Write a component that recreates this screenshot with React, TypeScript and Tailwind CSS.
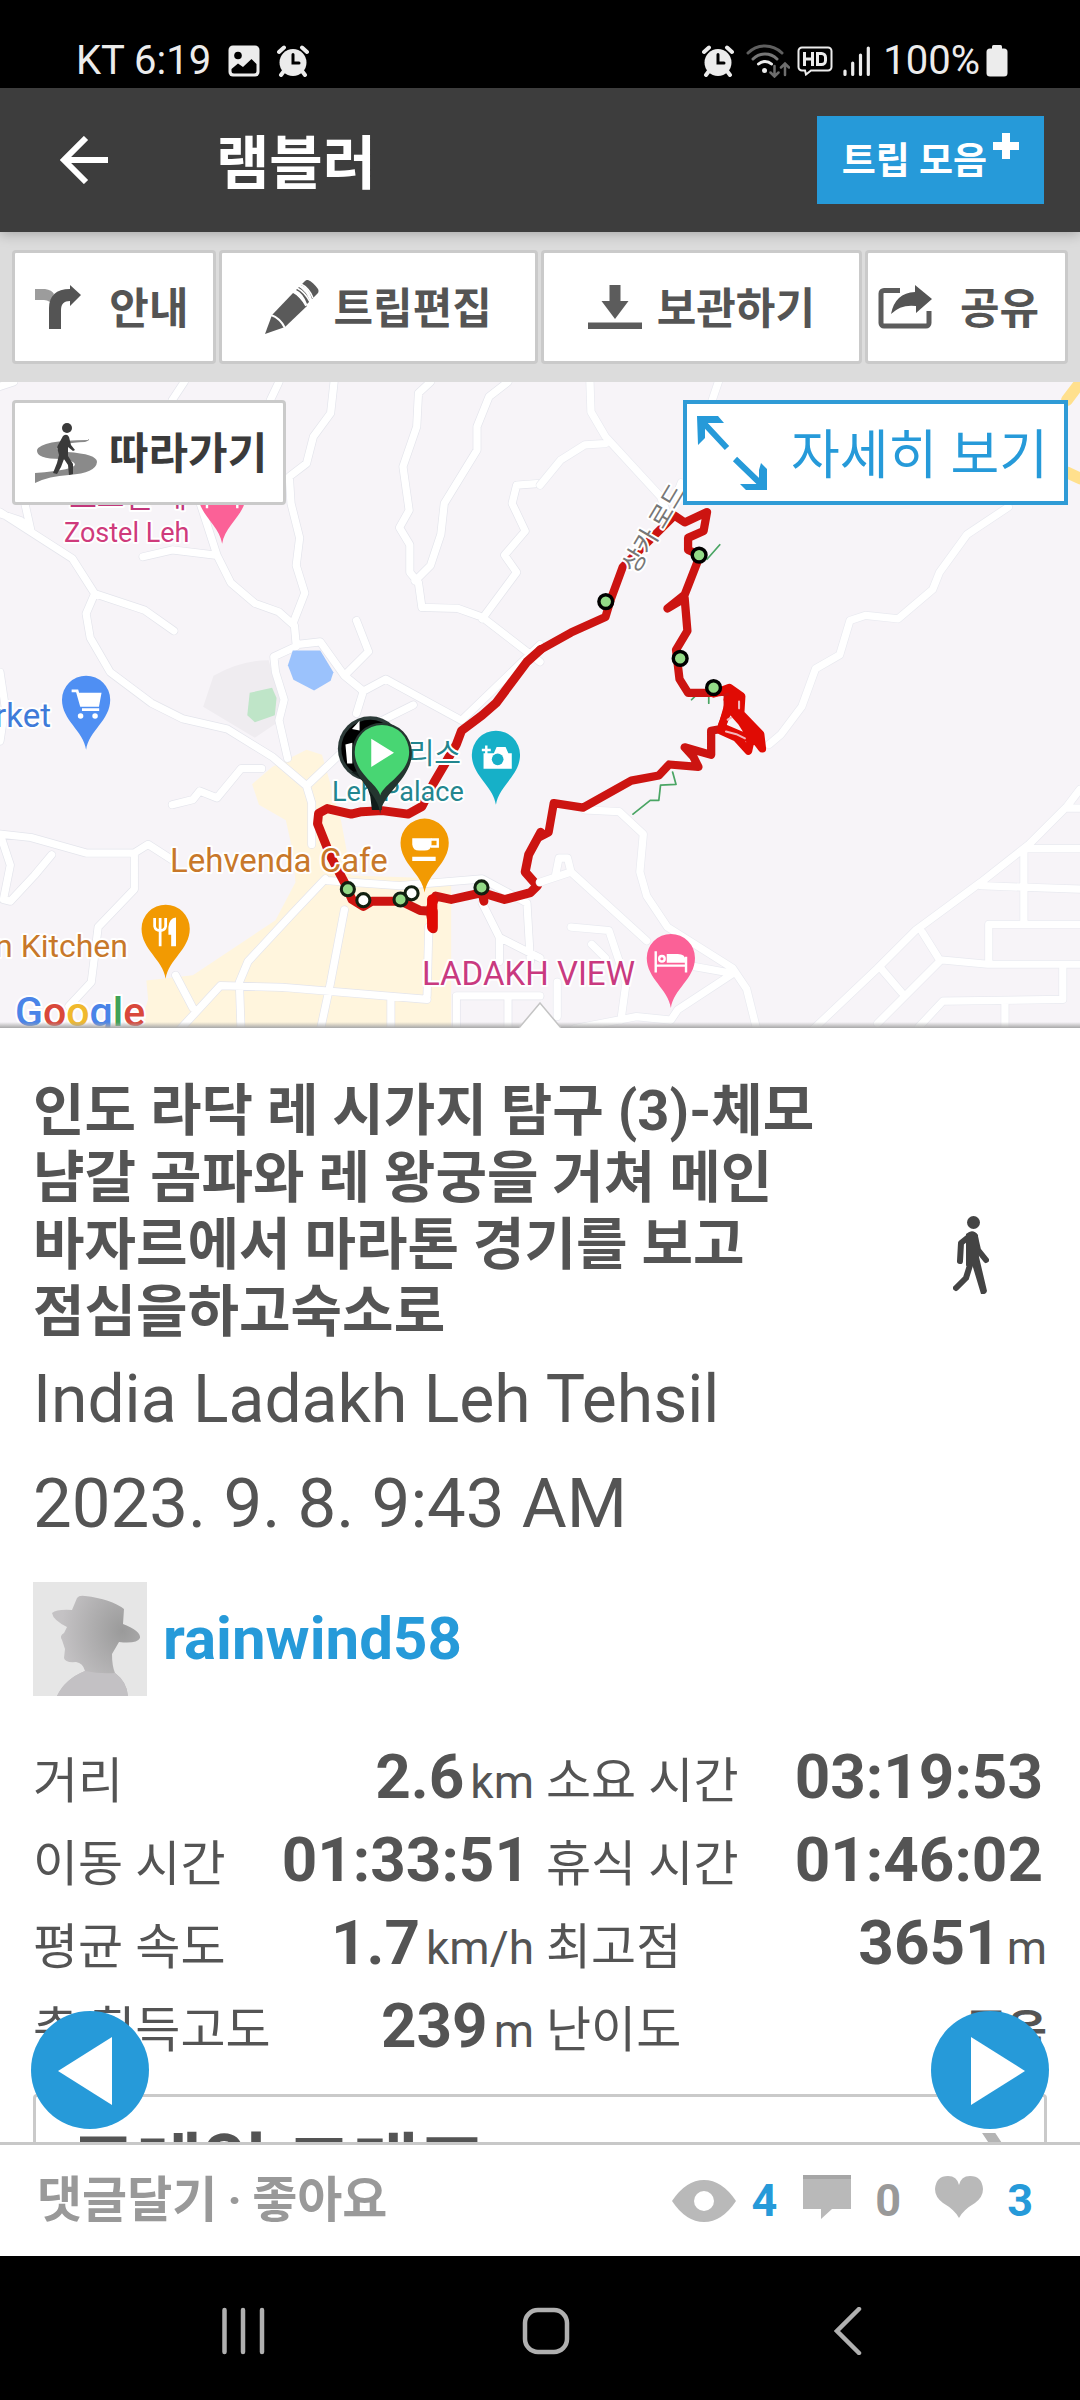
import type { ReactNode } from "react";

interface Stat {
  label: string;
  value: string;
  unit?: string;
}

const stats: Stat[] = [
  { label: "거리", value: "2.6", unit: "km" },
  { label: "소요 시간", value: "03:19:53" },
  { label: "이동 시간", value: "01:33:51" },
  { label: "휴식 시간", value: "01:46:02" },
  { label: "평균 속도", value: "1.7", unit: "km/h" },
  { label: "최고점", value: "3651", unit: "m" },
  { label: "총 획득고도", value: "239", unit: "m" },
  { label: "난이도", value: "좋음" },
];

/* ---------- status bar icons ---------- */

function AlarmIcon() {
  return (
    <svg className="size-8" viewBox="0 0 32 32" aria-hidden="true">
      <circle cx="16" cy="17.500" r="13.500" fill="#ececec" />
      <path d="M2 7l5-4.500M30 7l-5-4.500" stroke="#ececec" strokeWidth="4" strokeLinecap="round" />
      <path d="M7 26l-3 4M25 26l3 4" stroke="#ececec" strokeWidth="4" strokeLinecap="round" />
      <path d="M16 9.500V18h6" stroke="#000" strokeWidth="3" fill="none" strokeLinecap="round" />
    </svg>
  );
}

function PictureIcon() {
  return (
    <svg className="size-8" viewBox="0 0 32 32" aria-hidden="true">
      <rect x="0.500" y="0.500" width="31" height="31" rx="4.500" fill="#ececec" />
      <circle cx="10" cy="10.500" r="3.800" fill="#000" />
      <path d="M3.500 24l6.500-5.500 5 3.500 8.500-8 5 5v7a2.500 2.500 0 0 1-2.500 2.500H6A2.500 2.500 0 0 1 3.500 26z" fill="#000" />
    </svg>
  );
}

function WifiIcon() {
  return (
    <svg className="h-[34px] w-[44px]" viewBox="0 0 44 34" fill="none" strokeLinecap="round" aria-hidden="true">
      <path d="M2 9a24 24 0 0 1 34 0" stroke="#5f5f5f" strokeWidth="3" />
      <path d="M7 15a17 17 0 0 1 24 0" stroke="#777" strokeWidth="3" />
      <path d="M12.500 20a9.500 9.500 0 0 1 13 0" stroke="#ececec" strokeWidth="3" />
      <circle cx="18.500" cy="26.500" r="2.500" fill="#ececec" />
      <path d="M28.500 22v10M24.500 28.500l4 4 4-4M39 31V20M35 23.500l4-4 4 4" stroke="#6d6d6d" strokeWidth="2.500" />
    </svg>
  );
}

function HdIcon() {
  return (
    <svg className="h-[30px] w-[36px]" viewBox="0 0 36 30" fill="none" stroke="#ececec" aria-hidden="true">
      <path d="M5 1.500h26a3.500 3.500 0 0 1 3.500 3.500v16a3.500 3.500 0 0 1-3.500 3.500H14l-5 4-1-4H5A3.500 3.500 0 0 1 1.500 21V5A3.500 3.500 0 0 1 5 1.500z" strokeWidth="2" />
      <path d="M7.500 6v14M15.500 6v14M7.500 13h8" strokeWidth="3" />
      <path d="M20.500 7.500h4a4 4 0 0 1 4 4v3a4 4 0 0 1-4 4h-4z" strokeWidth="3" />
    </svg>
  );
}

function SignalIcon() {
  return (
    <svg className="h-[32px] w-[28px]" viewBox="0 0 28 32" stroke="#ececec" strokeWidth="3.200" strokeLinecap="round" aria-hidden="true">
      <path d="M2 26v3.500M9.700 18v11.500M17.500 10v19.500M25.300 3v26.500" />
    </svg>
  );
}

function BatteryIcon() {
  return (
    <svg className="h-8 w-[22px]" viewBox="0 0 22 32" fill="#ececec" aria-hidden="true">
      <rect x="6" y="0" width="10" height="6" rx="1.500" />
      <rect x="0.500" y="3.500" width="21" height="28" rx="3.500" />
    </svg>
  );
}

/* ---------- toolbar icons ---------- */

function GuideIcon() {
  return (
    <svg className="h-[44px] w-[46px]" viewBox="0 0 46 44" aria-hidden="true">
      <path d="M0 4h10q7 1 9 5l-4 8q-3-2-6-2H0z" fill="#9c9c9c" />
      <path d="M14 44V23C14 11 21 4 35 4V0l11 10-11 11v-5c-6 0-9 3-9 9v19z" fill="#545454" />
    </svg>
  );
}

function PencilIcon() {
  return (
    <svg className="size-[54px]" viewBox="0 0 54 54" aria-hidden="true">
      <path d="M0 54l7-19L29 12l13 14-22 21z" fill="#5a5a5a" />
      <path d="M31 10q7 3 11 14l3-3Q41 11 34 7zM36 5q8 3 11 14l6-6q1-2 0-4Q48 2 43 0q-2-.5-4 2z" fill="#5a5a5a" />
      <path d="M6 35q9 3 14 13" fill="none" stroke="#fff" strokeWidth="2" />
      <path d="M28 12q8 4 13 14M32 8q8 4 13 14M36 4q8 4 12 14" fill="none" stroke="#fff" strokeWidth="1.600" />
    </svg>
  );
}

function SaveIcon() {
  return (
    <svg className="h-[44px] w-[54px]" viewBox="0 0 54 44" fill="#5c5c5c" aria-hidden="true">
      <path d="M21.500 0h11v16h8L27 34 13.500 16h8zM0 37.500h54V44H0z" />
    </svg>
  );
}

function ShareIcon() {
  return (
    <svg className="h-[44px] w-[54px]" viewBox="0 0 54 44" aria-hidden="true">
      <path d="M22 5.500H6a3 3 0 0 0-3 3V38a3 3 0 0 0 3 3h42a3 3 0 0 0 3-3V26" fill="none" stroke="#5c5c5c" strokeWidth="5" />
      <path d="M37 0l17 14-16 14v-7q-15-2-25 8Q17 8 37 7z" fill="#545454" />
    </svg>
  );
}

function FollowIcon() {
  return (
    <svg className="h-[60px] w-[62px]" viewBox="0 0 62 60" aria-hidden="true">
      <path d="M53 17Q6 17 2 27q-1 9 24 9 12 1 14 5 1 6-40 9v10q14-7 34-8 27-2 28-13 0-8-30-10-12-1-10-5 4-4 28-5 6-2 3-3z" fill="#8a8a8a" />
      <circle cx="32" cy="5" r="5" fill="#3a3a3a" />
      <path d="M28 13q4-3 6 1l2 8 4 5-2 1-5-4v9l5 8v10l-4 1-1-10-4-6-3 8-4 7-4-1 4-10 2-8-2-8z" fill="#3a3a3a" />
    </svg>
  );
}

function ExpandIcon() {
  return (
    <svg className="h-[74px] w-[70px]" viewBox="0 0 70 74" fill="none" stroke="#269ad9" strokeWidth="6" aria-hidden="true">
      <path d="M3 3l27 29M38 43l29 28" />
      <path d="M0 0h21l6 7H8v15l-7 7zM70 74H49l-6-6h19V54l2-7 6 6z" fill="#269ad9" stroke="none" />
    </svg>
  );
}

function WalkIcon() {
  return (
    <svg className="h-[78px] w-[36px]" viewBox="0 0 36 78" role="img" aria-label="걷기">
      <circle cx="20.500" cy="6.500" r="6.500" fill="#444" />
      <path d="M18 19L8 27 7 45M22 21l3 13 8 10M18 46l-5 16-10 10" fill="none" stroke="#444" strokeWidth="6" strokeLinecap="round" strokeLinejoin="round" />
      <path d="M13 18q7-6 12 1l1 22 8 34q-1 4-6 3l-9-30-6 2z" fill="#444" />
    </svg>
  );
}

/* ---------- map ---------- */

interface PinProps {
  x: number;
  y: number;
  color: string;
  children?: ReactNode;
}

// x, y is the tip of the pin
function Pin({ x, y, color, children }: PinProps) {
  return (
    <g transform={`translate(${x} ${y})`}>
      <path d="M0 0C-8-55-70-85-70-145A70 70 0 1 1 70-145C70-85 8-55 0 0z" fill={color} />
      {children}
    </g>
  );
}

function Bed() {
  return (
    <g transform="translate(0 -135)" fill="none" stroke="#fff" strokeWidth="7">
      <path d="M-44-30V32M44-14V32M-44 12H44" />
      <path d="M-12-22H20q22 0 22 18v8h-54z" fill="#fff" stroke="none" />
      <circle cx="-26" cy="-8" r="8" />
    </g>
  );
}

const westRoads =
  "M0 35L210 170 275 272 250 330 262 400 320 500 440 590 530 635 660 665 790 745 890 830 905 880 905 1000M275 272L420 320 505 380M415 165L500 145 625 160M575-10L630 160 670 240 740 300 810 325 855 365 860 420M970-343L960-252 910-184 890-106 840-68 845 10 870 110 860 190 885 270 850 360M535-343L500-290M810-343L785-290M1250-343L1215-310 1210-213 1170-97 1188 30 1160 80 1190 130 1190 210 1215 240 1225 312 1330 315 1400 340 1568 470M1475-343L1420-300 1385-213 1385-145 1290 10 1280 100 1250 190 1205 235M1568-48L1500-43 1487 10 1525 90 1465 160 1500 210 1400 345M860 420L930 412 1000 510 1055 555 1120 520 1340 640 1568 420M1000 510L1070 440 1035 350M860 425L795 455 800 500 825 580 810 640 835 750M1055 555L1035 620M1200 595L1090 650M500 885L560 870 580 845 630 865 700 780 760 780M0 970L90 980 250 1025 390 1025 430 1000 500 1045M390 1025V1130L285 1240 265 1400 200 1470M5 985L30 1060 10 1160 30 1165 100 1090 150 1030M890 830L985 740M945 1100L850 1200 720 1340 695 1400 700 1540M1000 1190L960 1400 930 1540M520 1540L640 1410 820 1415 1240 1450M510 1380L560 1475M1245 1240L1240 1440M1135 1450V1540M950 1105L1160 1120 1400 1100 1530 1170 1540 1340M1400 1170L1450 1270 1568 1330M1450 1270V1340M1325 1540V1440H1568M1475 1440V1540M0 500L15 600 0 700M0-330L40-343M0 40L60 60 90 90M70 0L90 90";

const eastRoads =
  "M790 1540L980 1360 1090 1250 1280 1110 1420 1000 1530 890 1568 840M1420 1012H1568M1280 1120L1568 1130M1405 1012V1230M1303 1345V1232H1568M1110 1255L1160 1335 1300 1348H1568M990 1360L1050 1430M1160 1340L980 1520M1100 1530L1170 1455 1518 1450V1348M1350 1460V1540M1530 895H1568M130 900L230 905 300 970 290 1080 310 1150 370 1240 560 1360 600 1420 630 1540M0 1110L90 1080 310 1280M45 1090L55 1040 80 1040 90 1080M90 1240L200 1250 250 1400 235 1510M560 1375L400 1480 380 1510 280 1500 100 1535M450 1355L560 1375M150 1290L190 1330M50 1400V1500M1360 20L1240 100 1160 210 1140 260 1040 345 945 335 900 350 870 450 800 490 760 600 700 680 665 710M145-343L148-256 190-184 350-10 370 40M0-43L60-116 130-160 190-164M518-343L500-290M410-50L395-10";

function TripMap() {
  return (
    <svg
      className="block h-[646px] w-full bg-[#f7f4f8]"
      viewBox="0 382 1080 646"
      preserveAspectRatio="xMidYMid slice"
      role="img"
      aria-label="트립 경로 지도"
    >
      {/* west half */}
      <g transform="translate(0 500) scale(0.3444)" fill="none" strokeLinejoin="round" strokeLinecap="round">
        <path d="M620 510Q700 465 780 465L820 600 800 650 740 690 590 600z" fill="#efecf0" />
        <path d="M725 560L790 545 803 575 798 625 740 645 718 625z" fill="#bfe5c8" />
        <path d="M890 725L790 775 732 825 752 885 830 930 850 1020 858 1110 800 1220 560 1380 425 1395 430 1450 400 1545H1310V1100L1020 1090 990 930 935 740z" fill="#fff5dd" />
        <path d={westRoads} stroke="#e4e5ec" strokeWidth="25" />
        <path d={westRoads} stroke="#fff" strokeWidth="21" />
        <path d="M850 437H930L968 500 960 525 912 553 852 522 836 480z" fill="#9bc2fc" />
        <path
          d="M1570 434L1530 470 1440 590 1400 625 1340 670 1325 710 1260 820 1225 890 1185 912 1110 902 1050 905 1020 912 950 896 925 910 922 940 960 1035 1000 1110 1022 1160 1055 1180 1080 1165H1165L1220 1192 1258 1195V1245L1248 1190 1265 1150 1310 1160 1400 1140 1405 1165 1400 1140 1465 1160 1540 1140 1560 1120 1525 1080 1535 1030 1570 965"
          stroke="#cc1411"
          strokeWidth="26"
        />
        <path d="M1255 1160V1240" stroke="#e00b04" strokeWidth="30" />
      </g>

      {/* east half */}
      <g transform="translate(540 500) scale(0.3444)" fill="none" strokeLinejoin="round" strokeLinecap="round">
        <path d={eastRoads} stroke="#e9eaf0" strokeWidth="25" />
        <path d={eastRoads} stroke="#fff" strokeWidth="21" />
        <path d="M1568-340L1530-290M1530-80L1570-62" stroke="#ffe08d" strokeWidth="34" />
        <path d="M270 912L320 872H345L350 828 395 826 385 790M485 172L522 130M440 580L450 570M490 590V560" stroke="#4aa564" strokeWidth="5" />
        <path
          d="M0 435L90 385 190 340 205 290 240 195 390 45 420 65 485 35 475 90 430 110V145L465 160 420 275 370 315 420 285 428 380 395 435 405 520 430 560 500 560 545 555 545 610 525 665 497 670V740L420 718 445 745 460 775 375 768 345 800 265 815 125 893 40 880 25 965 0 978"
          stroke="#cc1411"
          strokeWidth="24"
        />
        <path
          d="M505 562L550 545 585 570 582 620 640 680 645 722 590 650 545 600 525 670 570 690 605 728 612 695 530 660 M560 565L570 620 620 700M545 580L600 660 M550 600L530 650"
          stroke="#e00b04"
          strokeWidth="23"
        />
        <path d="M540 672L570 680 595 692M545 638l10-6M578 585v20" stroke="#f3b6bb" strokeWidth="6" />
      </g>

      {/* place labels */}
      <g className="font-['Roboto','Noto_Sans_CJK_KR',sans-serif]" stroke="#fff" strokeWidth="4" strokeLinejoin="round" paintOrder="stroke">
        <text x="187" y="507" textAnchor="end" fontSize="30" fill="#c2377b">조스텔 레</text>
        <text x="64" y="542" fontSize="27" fill="#cf3b7c">Zostel Leh</text>
        <text x="51" y="727" textAnchor="end" fontSize="33" fill="#3f7bd9">Market</text>
        <text x="461" y="764" textAnchor="end" fontSize="29" fill="#23868f">레 팰리스</text>
        <text x="332" y="801" fontSize="27" fill="#23868f">Leh Palace</text>
        <text x="170" y="872" fontSize="33" fill="#c8782a">Lehvenda Cafe</text>
        <text x="128" y="957" textAnchor="end" fontSize="32" fill="#c8782a">Tibetan Kitchen</text>
        <text x="422" y="985" fontSize="33" fill="#c93a80">LADAKH VIEW</text>
        <text transform="translate(636 575) rotate(-59)" fontSize="25" fill="#777">상카 로드</text>
      </g>

      <g transform="translate(0 500) scale(0.3444)">
        <Pin x={645} y={127} color="#fb6197">
          <Bed />
        </Pin>
        <Pin x={250} y={725} color="#4f8ff3">
          <path d="M-42-171h16l12 42h48l6-32h-60M-12-116h50" fill="none" stroke="#fff" strokeWidth="8" />
          <path d="M-24-161h64l-6 32h-48z" fill="#fff" />
          <circle cx="-16" cy="-98" r="8" fill="#fff" />
          <circle cx="26" cy="-98" r="8" fill="#fff" />
        </Pin>
        <Pin x={1440} y={885} color="#16b0c8">
          <path d="M-36-150h30l8-18h26l8 18h10v45h-82z" fill="#fff" />
          <circle cx="5" cy="-132" r="17" fill="#16b0c8" />
          <path d="M-28-172v26M-41-159h26" stroke="#fff" strokeWidth="7" />
        </Pin>
        <Pin x={1233} y={1140} color="#f29a02">
          <path d="M-36-158h56v18q-2 18-20 18h-16q-18 0-20-18zM-36-104h68v12h-68z" fill="#fff" />
          <path d="M18-154h20v20H18" fill="none" stroke="#fff" strokeWidth="7" />
        </Pin>
        <Pin x={481} y={1390} color="#f29a02">
          <path d="M-32-176v24q2 12 16 12t16-12v-24M-16-176v82" fill="none" stroke="#fff" strokeWidth="8" />
          <path d="M8-150q2-26 22-28v84H16v-34H8z" fill="#fff" />
        </Pin>

        {/* finish and start markers */}
        <circle cx="1075" cy="722" r="94" fill="#2c3a38" />
        <circle cx="1075" cy="722" r="84" fill="#000" />
        <path d="M1022 665l22-24v28zM1003 710l20-5v60h-15z" fill="#fff" />
        <path d="M1020 790q45 25 55 70l5 40h28V780z" fill="#111c1a" />
        <path d="M1104 912C1100 850 1022 810 1022 734A87 87 0 1 1 1196 734C1196 810 1110 850 1104 912z" fill="#24352f" />
        <path d="M1104 858C1098 825 1030 795 1030 732A79 79 0 1 1 1188 732C1188 795 1112 825 1104 858z" fill="#48d673" />
        <path d="M1078 693v82l66-41z" fill="#fff" />

        <g stroke="#122011" strokeWidth="9">
          <circle cx="1195" cy="1142" r="19" fill="#fff" />
          <circle cx="1010" cy="1130" r="19" fill="#93da87" />
          <circle cx="1055" cy="1162" r="19" fill="#fff" />
          <circle cx="1163" cy="1160" r="19" fill="#93da87" />
          <circle cx="1398" cy="1125" r="19" fill="#93da87" />
        </g>
      </g>
      <g transform="translate(540 500) scale(0.3444)">
        <Pin x={380} y={1475} color="#fb6197">
          <Bed />
        </Pin>
        <g fill="#93da87" stroke="#000" strokeWidth="10">
          <circle cx="191" cy="295" r="20" />
          <circle cx="462" cy="160" r="20" />
          <circle cx="407" cy="460" r="20" />
          <circle cx="504" cy="545" r="20" />
        </g>
      </g>

      <text
        className="font-['Roboto',sans-serif]"
        x="15"
        y="1026"
        fontSize="41"
        fontWeight="500"
        stroke="#fff"
        strokeWidth="4"
        paintOrder="stroke"
      >
        <tspan fill="#4a84e8">G</tspan>
        <tspan fill="#d9483b">o</tspan>
        <tspan fill="#f0b92d">o</tspan>
        <tspan fill="#4a84e8">g</tspan>
        <tspan fill="#3fa257">l</tspan>
        <tspan fill="#d9483b">e</tspan>
      </text>
    </svg>
  );
}

function TripStat({ label, value, unit }: Stat) {
  const isNumber = /\d/.test(value);
  return (
    <div className="flex h-[83px] items-baseline justify-between leading-[83px] whitespace-nowrap">
      <dt className="text-[49px]">{label}</dt>
      <dd className="flex items-baseline gap-[6px]">
        <span className={isNumber && !unit ? "pr-1 text-[62px] font-bold" : "text-[62px] font-bold"}>
          {isNumber ? value : <span className="text-[44px]">{value}</span>}
        </span>
        {unit && <span className="text-[46px]">{unit}</span>}
      </dd>
    </div>
  );
}

const toolButton =
  "flex h-[114px] items-center justify-center rounded-[4px] border-[3px] border-[#cacaca] bg-white text-[43px] font-bold whitespace-nowrap text-[#545454]";

export default function App() {
  return (
    <div className="flex h-screen w-full flex-col overflow-hidden bg-white font-['Roboto','Noto_Sans_CJK_KR',sans-serif] text-[#545454]">
      {/* status bar */}
      <div className="flex h-[88px] shrink-0 items-end justify-between bg-black pr-[72px] pb-1 pl-[76px] text-[40px] leading-[46px] text-[#ececec]">
        <div className="flex items-center gap-[17px]">
          <span>KT 6:19</span>
          <PictureIcon />
          <AlarmIcon />
        </div>
        <div className="flex items-center">
          <AlarmIcon />
          <span className="ml-3">
            <WifiIcon />
          </span>
          <span className="ml-[7px]">
            <HdIcon />
          </span>
          <span className="ml-[10px]">
            <SignalIcon />
          </span>
          <span className="ml-3">100%</span>
          <span className="ml-[6px]">
            <BatteryIcon />
          </span>
        </div>
      </div>

      {/* app header */}
      <header className="relative z-10 flex h-[144px] shrink-0 items-center bg-[#3d3d3d] pr-9 pl-[60px] text-white shadow-[0_2px_12px_rgba(0,0,0,0.25)]">
        <button type="button" aria-label="뒤로">
          <svg className="size-12" viewBox="0 0 48 48" fill="none" stroke="#fff" strokeWidth="6" aria-hidden="true">
            <path d="M48 24H6M26 2L4 24l22 22" />
          </svg>
        </button>
        <h1 className="ml-[108px] pt-2 text-[58px] leading-[72px] font-bold">램블러</h1>
        <button type="button" className="ml-auto flex h-[88px] items-center gap-[6px] bg-[#269ad9] px-[25px] text-[37px] leading-[44px] font-bold">
          <span className="pt-1">트립 모음</span>
          <svg className="mb-[28px] size-[26px]" viewBox="0 0 26 26" fill="#fff" aria-hidden="true">
            <path d="M9 0h8v9h9v8h-9v9H9v-9H0V9h9z" />
          </svg>
        </button>
      </header>

      {/* toolbar */}
      <nav className="grid shrink-0 grid-cols-[204fr_319fr_322fr_203fr] gap-[3px] bg-[#dcdcdc] px-3 py-[18px]">
        <button type="button" className={`${toolButton} gap-7 pr-1`}>
          <GuideIcon />
          <span className="pt-1">안내</span>
        </button>
        <button type="button" className={`${toolButton} gap-[15px]`}>
          <PencilIcon />
          <span className="pt-1">트립편집</span>
        </button>
        <button type="button" className={`${toolButton} gap-[15px]`}>
          <SaveIcon />
          <span className="pt-1">보관하기</span>
        </button>
        <button type="button" className={`${toolButton} gap-7 pr-4`}>
          <ShareIcon />
          <span className="pt-1">공유</span>
        </button>
      </nav>

      <main className="relative min-h-0 flex-1 overflow-hidden">
        <section className="relative">
          <TripMap />
          <div className="absolute inset-x-3 top-[18px] flex items-start justify-between whitespace-nowrap">
            <button
              type="button"
              className="flex h-[105px] items-center gap-3 rounded-[4px] border-[3px] border-[#cacaca] bg-white pr-4 pl-5 text-[43px] font-bold text-[#3a3a3a]"
            >
              <FollowIcon />
              <span className="pt-1">따라가기</span>
            </button>
            <button
              type="button"
              className="flex h-[105px] items-center gap-6 border-[4px] border-[#2f9bd6] bg-white pr-4 pl-[10px] text-[53px] text-[#269ad9]"
            >
              <ExpandIcon />
              <span className="pt-2">자세히 보기</span>
            </button>
          </div>
          <div className="absolute inset-x-0 bottom-0 h-[6px] bg-linear-to-b from-transparent to-[#a8a8a8]" />
          <svg className="absolute bottom-0 left-1/2 h-[26px] w-[42px] -translate-x-1/2" viewBox="0 0 42 26" aria-hidden="true">
            <path d="M0 26L21 1l21 25z" fill="#fff" />
            <path d="M0 26L21 1l21 25" fill="none" stroke="#c4c4c4" strokeWidth="1.500" />
          </svg>
        </section>

        <section className="px-[33px] pt-[50px]">
          <div className="flex">
            <div className="min-w-0 flex-1">
              <h2 className="text-[56px] leading-[67px] font-bold break-keep">
                인도 라닥 레 시가지 탐구 (3)-체모 냠갈 곰파와 레 왕궁을 거쳐 메인 바자르에서 마라톤 경기를 보고 점심을하고숙소로
              </h2>
              <p className="mt-[2px] text-[66px] leading-[104px]">India Ladakh Leh Tehsil</p>
              <p className="text-[69px] leading-[104px]">2023. 9. 8. 9:43 AM</p>
            </div>
            <div className="mt-[138px] flex w-[152px] shrink-0 justify-center">
              <WalkIcon />
            </div>
          </div>

          <a href="#rainwind58" className="mt-[26px] flex items-center gap-4 text-[60px] font-bold text-[#269ad9]">
            <svg className="size-[114px]" viewBox="0 0 114 114" aria-hidden="true">
              <defs>
                <radialGradient id="hat" cx="0.800" cy="0.350" r="0.700">
                  <stop offset="0" stopColor="#9a9a9a" />
                  <stop offset="1" stopColor="#c4c2c4" />
                </radialGradient>
              </defs>
              <rect width="114" height="114" fill="#e6e6e6" />
              <path d="M24 114q8-17 28-25-2-8-9-9-11 1-12-4l1-9-3-9q-3-4 2-7l3-6Q20 38 19 31q5-4 20-3l5-12q2-3 8-2 26 3 39 13l-1 15q18 7 17 14-3 6-21 4l-7 12q0 12 3 19 12 9 13 23z" fill="url(#hat)" />
              <path d="M24 114q8-17 28-25 15 3 30 2 12 9 13 23z" fill="#c3c1c4" />
            </svg>
            rainwind58
          </a>

          <dl className="mt-[39px] grid grid-cols-2 gap-x-3">
            {stats.map((stat) => (
              <TripStat key={stat.label} {...stat} />
            ))}
          </dl>

          <a
            href="#trail-graph"
            className="mt-[27px] flex items-center justify-between rounded-[4px] border-[3px] border-[#cacaca] py-[29px] pr-6 pl-[34px] text-[72px] leading-[84px] font-bold"
          >
            트레일 그래프
            <svg className="h-[70px] w-[42px]" viewBox="0 0 42 70" fill="none" stroke="#b4b4b4" strokeWidth="11" aria-hidden="true">
              <path d="M4-10l30 45L4 80" />
            </svg>
          </a>
        </section>

        <div className="pointer-events-none absolute inset-x-[31px] bottom-[13px] flex justify-between">
          <button type="button" aria-label="이전" className="pointer-events-auto rounded-full bg-[#269ad9]">
            <svg className="size-[118px]" viewBox="0 0 118 118" aria-hidden="true">
              <path d="M27 60l54-34v68z" fill="#fff" />
            </svg>
          </button>
          <button type="button" aria-label="다음" className="pointer-events-auto rounded-full bg-[#269ad9]">
            <svg className="size-[118px]" viewBox="0 0 118 118" aria-hidden="true">
              <path d="M94 60L40 26v68z" fill="#fff" />
            </svg>
          </button>
        </div>
      </main>

      {/* comments and likes */}
      <footer className="flex h-[114px] shrink-0 items-center justify-between border-t-[3px] border-[#c8c8c8] bg-white pr-[47px] pl-[37px] font-bold text-[#999]">
        <div className="flex gap-[10px] text-[49px] leading-[60px]">
          <button type="button">댓글달기</button>
          <span>·</span>
          <button type="button">좋아요</button>
        </div>
        <div className="flex items-center text-[45px] leading-[60px]">
          <svg className="h-[42px] w-[64px]" viewBox="0 0 64 42" role="img" aria-label="조회">
            <path d="M0 21Q14 0 32 0t32 21Q50 42 32 42T0 21z" fill="#b9b9b9" />
            <circle cx="32" cy="21" r="10" fill="#fff" />
          </svg>
          <span className="ml-4 text-[#269ad9]">4</span>
          <svg className="mb-2 ml-[26px] h-[44px] w-[48px]" viewBox="0 0 48 44" role="img" aria-label="댓글">
            <path d="M0 0h48v34H29L18 44V34H0z" fill="#b9b9b9" />
            <path d="M0 0h48v4H0z" fill="#a6a6a6" />
          </svg>
          <span className="ml-6">0</span>
          <svg className="mb-2 ml-[34px] h-[42px] w-[48px]" viewBox="0 0 48 42" role="img" aria-label="좋아요">
            <path d="M24 42Q20 34 8 27 0 21 0 13 1 0 13 0q9 0 11 9Q26 0 35 0q12 0 13 13 0 8-8 14-12 7-16 15z" fill="#b9b9b9" />
          </svg>
          <span className="ml-6 text-[#269ad9]">3</span>
        </div>
      </footer>

      {/* system navigation */}
      <div className="flex h-[144px] shrink-0 items-center justify-between bg-black pt-[6px] pr-[206px] pl-[217px]">
        <button type="button" aria-label="최근 앱">
          <svg className="h-12 w-[52px]" viewBox="0 0 52 48" stroke="#b0b0b0" strokeWidth="4.500" strokeLinecap="round" aria-hidden="true">
            <path d="M7.500 3v42M26 3v42M45 3v42" />
          </svg>
        </button>
        <button type="button" aria-label="홈">
          <svg className="size-12" viewBox="0 0 48 48" fill="none" stroke="#b0b0b0" strokeWidth="4.500" aria-hidden="true">
            <rect x="3" y="3" width="42" height="42" rx="13" />
          </svg>
        </button>
        <button type="button" aria-label="뒤로 가기" className="px-3">
          <svg className="h-12 w-[28px]" viewBox="0 0 28 48" fill="none" stroke="#b0b0b0" strokeWidth="4.500" strokeLinecap="round" aria-hidden="true">
            <path d="M25 2L3 24l22 22" />
          </svg>
        </button>
      </div>
    </div>
  );
}
